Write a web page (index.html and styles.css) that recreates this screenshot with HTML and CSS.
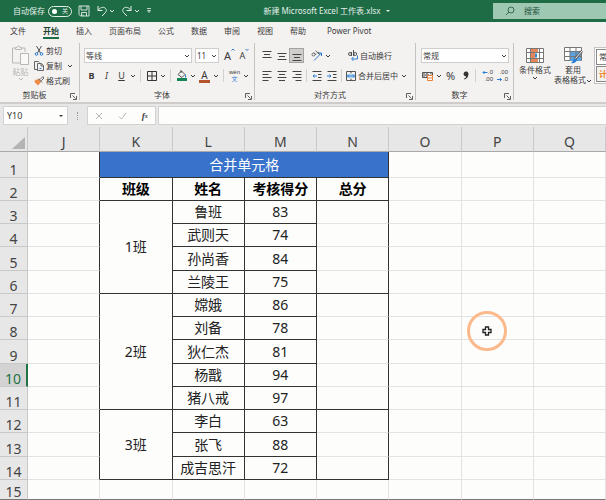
FILE: index.html
```html
<!DOCTYPE html>
<html lang="zh-CN">
<head>
<meta charset="utf-8">
<title>新建 Microsoft Excel 工作表.xlsx</title>
<link rel="stylesheet" href="styles.css">
</head>
<body>
<svg class="defs" aria-hidden="true">
  <symbol id="chev" viewBox="0 0 6 4"><path d="M1 1l2 2 2-2" fill="none" stroke="currentColor"/></symbol>
  <symbol id="launch" viewBox="0 0 7 7"><path d="M.5 5V.5H5M2.500 2.500l3 3M6.500 3v3.500H3" fill="none" stroke="currentColor" stroke-width=".8"/></symbol>
</svg>

<header class="titlebar">
  <label class="autosave">自动保存 <input type="checkbox" role="switch"><span class="switch">关</span></label>
  <button class="tb" aria-label="保存"><svg width="12" height="12" viewBox="0 0 12 12"><path d="M1 1h10v10H2.500L1 9.500zM3 1v4h6V1M3.500 11V7.500h5V11M5 9.500V11" fill="none" stroke="currentColor" stroke-width=".9"/></svg></button>
  <button class="tb" aria-label="撤消"><svg width="12" height="12" viewBox="0 0 12 12"><path d="M2 1v4.500h4.500M2 5.500C4 2.500 7 1.500 9 3s1.500 3.500 0 5L6 11" fill="none" stroke="currentColor"/></svg><svg class="chev"><use href="#chev"/></svg></button>
  <button class="tb" aria-label="恢复"><svg width="12" height="12" viewBox="0 0 12 12"><path d="M10 1v4.500H5.500M10 5.500C8 2.500 5 1.500 3 3s-1.500 3.500 0 5l3 3" fill="none" stroke="currentColor"/></svg><svg class="chev"><use href="#chev"/></svg></button>
  <button class="tb" aria-label="自定义快速访问工具栏"><svg width="6" height="6" viewBox="0 0 6 6"><path d="M1 .5h4M1.500 2.500h3L3 4.500z" fill="none" stroke="currentColor" stroke-width=".8"/></svg></button>
  <h1>新建 Microsoft Excel 工作表.xlsx <span class="caret"></span></h1>
  <label class="search"><svg width="10" height="10" viewBox="0 0 10 10"><circle cx="6" cy="4" r="3" fill="none" stroke="currentColor" stroke-width=".8"/><path d="M4 6L1 9" stroke="currentColor" stroke-width=".8"/></svg><input type="search" placeholder="搜索" aria-label="搜索"></label>
</header>

<nav class="tabs">
  <a href="#">文件</a><a href="#" class="on" aria-current="page">开始</a><a href="#">插入</a><a href="#">页面布局</a><a href="#">公式</a><a href="#">数据</a><a href="#">审阅</a><a href="#">视图</a><a href="#">帮助</a><a href="#">Power Pivot</a>
</nav>

<section class="ribbon">
  <div class="group clipboard">
    <div class="tools">
      <button class="big off"><svg width="19" height="21" viewBox="0 0 19 21"><path d="M4 3H1.500v15H9M11 3h3v4M4.500 4.500v-2H6c0-2 3-2 3 0h1.500v2z" fill="none" stroke="currentColor"/><path d="M9.500 8.500h8v11h-8z" fill="#f8f8f8" stroke="currentColor"/></svg><span>粘贴</span><svg class="chev"><use href="#chev"/></svg></button>
      <div class="stack">
        <button><svg width="10" height="10" viewBox="0 0 10 10"><path d="M2.500 0l4 7M7.500 0l-4 7" stroke="#555" fill="none"/><circle cx="2.500" cy="8" r="1.300" fill="none" stroke="#2b7cd3"/><circle cx="7.500" cy="8" r="1.300" fill="none" stroke="#2b7cd3"/></svg>剪切</button>
        <button><svg width="10" height="10" viewBox="0 0 10 10"><path d="M3.500 8.500h-3v-8h4l1 1M3.500 2.500h4l2 2v5h-6zM7 3v2h2" fill="none" stroke="#555" stroke-width=".9"/><path d="M5.500 7.500h2" stroke="#2b7cd3"/></svg>复制<svg class="chev"><use href="#chev"/></svg></button>
        <button><svg width="10" height="10" viewBox="0 0 10 10"><path d="M1 4l4-1 2 3-3 3.500L.5 6z" fill="#ef8b45"/><path d="M4.500 2.500l3.500 4M6 3.500L9 .500 10 2 7.300 4.800" fill="none" stroke="#555" stroke-width=".9"/></svg>格式刷</button>
      </div>
    </div>
    <footer>剪贴板<button aria-label="剪贴板设置"><svg class="launch"><use href="#launch"/></svg></button></footer>
  </div>

  <div class="group font">
    <div class="tools rows">
      <div class="row">
        <span class="pick face"><select aria-label="字体"><option>等线</option></select><svg class="chev"><use href="#chev"/></svg></span>
        <span class="pick size"><select aria-label="字号"><option>11</option></select><svg class="chev"><use href="#chev"/></svg></span>
        <button class="ic letter" aria-label="增大字号">A<svg width="4" height="8" viewBox="0 0 4 8"><path d="M.5 2.500L2 1l1.500 1.500" fill="none" stroke="#2b7cd3"/></svg></button>
        <button class="ic letter less" aria-label="减小字号">A<svg width="4" height="8" viewBox="0 0 4 8"><path d="M.5 1L2 2.500 3.500 1" fill="none" stroke="#2b7cd3"/></svg></button>
      </div>
      <div class="row">
        <button class="ic"><b>B</b></button><button class="ic"><i>I</i></button><button class="ic"><u>U</u></button><button class="dd" aria-label="下划线选项"><svg class="chev"><use href="#chev"/></svg></button><span class="sep"></span>
        <button class="ic" aria-label="边框"><svg width="10" height="10" viewBox="0 0 10 10"><path d="M.5.5h9v9h-9zM5 .5v9M.5 5h9" fill="none" stroke="#333"/></svg></button><button class="dd" aria-label="边框选项"><svg class="chev"><use href="#chev"/></svg></button><span class="sep"></span>
        <button class="ic" aria-label="填充颜色"><svg width="12" height="11" viewBox="0 0 12 11"><path d="M2 4.500l3.500-3.500 3.500 3.500-3 3zM5 0v3" fill="none" stroke="#444" stroke-width=".9"/><path d="M9 4q2 2 1 3.500H9z" fill="#2b7cd3"/><path d="M1 8h10v3H1z" fill="#158454"/></svg></button><button class="dd" aria-label="填充颜色选项"><svg class="chev"><use href="#chev"/></svg></button>
        <button class="ic color" aria-label="字体颜色">A</button><button class="dd" aria-label="字体颜色选项"><svg class="chev"><use href="#chev"/></svg></button><span class="sep"></span>
        <button class="ic pinyin" aria-label="拼音指南"><span>wén</span><span>文</span></button><button class="dd" aria-label="拼音选项"><svg class="chev"><use href="#chev"/></svg></button>
      </div>
    </div>
    <footer>字体<button aria-label="字体设置"><svg class="launch"><use href="#launch"/></svg></button></footer>
  </div>

  <div class="group align">
    <div class="tools rows">
      <div class="row">
        <button class="ic" aria-label="顶端对齐"><svg width="10" height="12" viewBox="0 0 10 12"><path d="M.5 1.500h9M2 4.500h6M.5 7.500h9" stroke="#444"/></svg></button><button class="ic" aria-label="垂直居中"><svg width="10" height="12" viewBox="0 0 10 12"><path d="M.5 3.500h9M2 6.500h6M.5 9.500h9" stroke="#444"/></svg></button><button class="ic pressed" aria-label="底端对齐" aria-pressed="true"><svg width="10" height="12" viewBox="0 0 10 12"><path d="M.5 4.500h9M2 7.500h6M.5 10.500h9" stroke="#444"/></svg></button><span class="gap"></span>
        <button class="ic" aria-label="方向"><svg width="12" height="12" viewBox="0 0 12 12"><path d="M3 10.500L10.500 3M7.500 3h3v3" fill="none" stroke="#2b7cd3"/><circle cx="2.500" cy="4.500" r="1.500" fill="none" stroke="#555" stroke-width=".8"/><path d="M3 2.500l2 2.500M4.500.5l4 4M6 3.500c0-2 3-1.500 2 .8" fill="none" stroke="#555" stroke-width=".8"/></svg></button><button class="dd" aria-label="方向选项"><svg class="chev"><use href="#chev"/></svg></button>
        <button class="text wrap"><svg width="10" height="11" viewBox="0 0 10 11"><circle cx="2" cy="4" r="1.500" fill="none" stroke="#444" stroke-width=".9"/><path d="M3.500 2v4M5.500 0v6" stroke="#444" stroke-width=".9"/><circle cx="7.200" cy="4" r="1.500" fill="none" stroke="#444" stroke-width=".9"/><path d="M9.500 5.500v3.500H4M5.500 7L3.500 9l2 1.800" fill="none" stroke="#2b7cd3"/></svg>自动换行</button>
      </div>
      <div class="row">
        <button class="ic" aria-label="左对齐"><svg width="10" height="10" viewBox="0 0 10 10"><path d="M.5.5h9M.5 3.500h6M.5 6.500h9M.5 9.500h6" stroke="#444"/></svg></button><button class="ic" aria-label="居中"><svg width="10" height="10" viewBox="0 0 10 10"><path d="M.5.5h9M2 3.500h6M.5 6.500h9M2 9.500h6" stroke="#444"/></svg></button><button class="ic" aria-label="右对齐"><svg width="10" height="10" viewBox="0 0 10 10"><path d="M.5.5h9M3.500 3.500h6M.5 6.500h9M3.500 9.500h6" stroke="#444"/></svg></button><span class="sep"></span>
        <button class="ic" aria-label="减少缩进量"><svg width="10" height="10" viewBox="0 0 10 10"><path d="M.5.500h9M6 3.500h3.500M6 6.500h3.500M.5 9.500h9" stroke="#444"/><path d="M5 5H1M2.500 3.500L1 5l1.500 1.500" fill="none" stroke="#2b7cd3"/></svg></button><button class="ic" aria-label="增加缩进量"><svg width="10" height="10" viewBox="0 0 10 10"><path d="M.5.500h9M6 3.500h3.500M6 6.500h3.500M.5 9.500h9" stroke="#444"/><path d="M0 5h4M2.500 3.500L4 5 2.500 6.500" fill="none" stroke="#2b7cd3"/></svg></button><span class="sep"></span>
        <button class="text merge"><svg width="10" height="10" viewBox="0 0 10 10"><path d="M.5.500h9v9h-9zM5 .5v2M5 7.500v2" fill="none" stroke="#555"/><path d="M1 3h8v4H1z" fill="#c3ddf5"/><path d="M1.500 5h7M3 3.500L1.500 5 3 6.500M7 3.500L8.500 5 7 6.500" fill="none" stroke="#2b7cd3"/></svg>合并后居中<svg class="chev"><use href="#chev"/></svg></button>
      </div>
    </div>
    <footer>对齐方式<button aria-label="对齐设置"><svg class="launch"><use href="#launch"/></svg></button></footer>
  </div>

  <div class="group number">
    <div class="tools rows">
      <div class="row"><span class="pick format"><select aria-label="数字格式"><option>常规</option></select><svg class="chev"><use href="#chev"/></svg></span></div>
      <div class="row">
        <button class="ic" aria-label="会计数字格式"><svg width="12" height="10" viewBox="0 0 12 10"><path d="M.5 1.500h10v5H.5zM2 1.500v5M9 1.500v2" fill="none" stroke="#555"/><circle cx="5" cy="4" r="1.300" fill="none" stroke="#555"/><path d="M5.500 4.500h5v5h-5z" fill="#fff" stroke="#e8833a"/><path d="M5.500 7h5" stroke="#e8833a"/></svg></button><button class="dd" aria-label="会计格式选项"><svg class="chev"><use href="#chev"/></svg></button><button class="ic pct">%</button><button class="ic" aria-label="千位分隔样式"><svg width="6" height="9" viewBox="0 0 6 9"><path d="M3 .5C5.500.5 6 3 5 5.300 4.300 7 3 8 1.300 8.500l-.3-.8c1.300-.6 2-1.400 2.200-2.500C1.500 5.500.6 4.500.6 3S1.500.5 3 .5z" fill="#333"/></svg></button><span class="sep"></span>
        <button class="ic dec" aria-label="增加小数位数"><span><svg width="6" height="5" viewBox="0 0 6 5"><path d="M5.500 2.500H1M2.500 1L1 2.500 2.500 4" fill="none" stroke="#2b7cd3"/></svg>.0</span><span>.00</span></button><button class="ic dec" aria-label="减少小数位数"><span>.00</span><span><svg width="6" height="5" viewBox="0 0 6 5"><path d="M0 2.500h4.500M3 1l1.500 1.500L3 4" fill="none" stroke="#2b7cd3"/></svg>.0</span></button>
      </div>
    </div>
    <footer>数字<button aria-label="数字设置"><svg class="launch"><use href="#launch"/></svg></button></footer>
  </div>

  <div class="group styles">
    <div class="tools">
      <button class="big"><svg width="18" height="15" viewBox="0 0 18 15"><path d="M.5.500h17v14H.500zM4.500.5v14M13.500.5v14M.5 4.500h17M.5 10.500h17" fill="#fff" stroke="#777"/><path d="M5 1h7v3H5zM5 5h4v5H5zM5 11h7v3H5z" fill="#e6875b"/><path d="M9 5.500h2v4H9z" fill="#3b87d0"/></svg><span>条件格式</span><svg class="chev"><use href="#chev"/></svg></button>
      <button class="big"><svg width="19" height="17" viewBox="0 0 19 17"><path d="M.5.500h17v13H.500z" fill="#fff" stroke="#777"/><path d="M6 5h11v9H6z" fill="#5aa2e0"/><path d="M6 .5v13M12 .5v13M.5 4.500h17M.5 9.500h17" stroke="#777" fill="none"/><path d="M18 4l-7 8" stroke="#555" stroke-width="2.500"/><path d="M18 4l-7 8" stroke="#fff"/><path d="M11 11l2 2q-2 4-6 3 2-1 2-3z" fill="#2b7cd3"/></svg><span>套用<br>表格格式<svg class="chev"><use href="#chev"/></svg></span></button>
      <div class="gallery"><button>常规</button><button class="calc">计算</button></div>
    </div>
  </div>
</section>

<section class="formula">
  <div class="name"><input type="text" value="Y10" aria-label="名称框"><span class="caret"></span></div>
  <span class="grip"></span>
  <div class="fx">
    <button aria-label="取消"><svg width="8" height="8" viewBox="0 0 8 8"><path d="M1 1l6 6M7 1L1 7" stroke="#b5b5b5"/></svg></button>
    <button aria-label="输入"><svg width="9" height="8" viewBox="0 0 9 8"><path d="M1 4.500L3.500 7 8 1" fill="none" stroke="#b5b5b5"/></svg></button>
    <button class="fn" aria-label="插入函数">f<sub>x</sub></button>
  </div>
  <input class="bar" type="text" aria-label="编辑栏">
</section>

<main class="sheet">
  <table>
    <colgroup><col class="rh"><col span="8"></colgroup>
    <thead><tr><th class="corner" aria-label="全选"><svg width="14" height="13" viewBox="0 0 14 13"><path d="M13 0v12H0z" fill="#b4b4b4"/></svg></th><th>J</th><th>K</th><th>L</th><th>M</th><th>N</th><th>O</th><th>P</th><th>Q</th></tr></thead>
    <tbody>
      <tr><th>1</th><td class="edge"></td><td colspan="4" class="title">合并单元格</td><td></td><td></td><td></td></tr>
      <tr class="heads"><th>2</th><td class="edge"></td><td class="d">班级</td><td class="d">姓名</td><td class="d">考核得分</td><td class="d">总分</td><td></td><td></td><td></td></tr>
      <tr><th>3</th><td class="edge"></td><td class="d" rowspan="4">1班</td><td class="d">鲁班</td><td class="d">83</td><td class="edge"></td><td></td><td></td><td></td></tr>
      <tr><th>4</th><td class="edge"></td><td class="d">武则天</td><td class="d">74</td><td class="edge"></td><td></td><td></td><td></td></tr>
      <tr><th>5</th><td class="edge"></td><td class="d">孙尚香</td><td class="d">84</td><td class="edge"></td><td></td><td></td><td></td></tr>
      <tr><th>6</th><td class="edge"></td><td class="d">兰陵王</td><td class="d">75</td><td class="d"></td><td></td><td></td><td></td></tr>
      <tr><th>7</th><td class="edge"></td><td class="d" rowspan="5">2班</td><td class="d">嫦娥</td><td class="d">86</td><td class="edge"></td><td></td><td></td><td></td></tr>
      <tr><th>8</th><td class="edge"></td><td class="d">刘备</td><td class="d">78</td><td class="edge"></td><td></td><td></td><td></td></tr>
      <tr><th>9</th><td class="edge"></td><td class="d">狄仁杰</td><td class="d">81</td><td class="edge"></td><td></td><td></td><td></td></tr>
      <tr><th class="current">10</th><td class="edge"></td><td class="d">杨戬</td><td class="d">94</td><td class="edge"></td><td></td><td></td><td></td></tr>
      <tr><th>11</th><td class="edge"></td><td class="d">猪八戒</td><td class="d">97</td><td class="d"></td><td></td><td></td><td></td></tr>
      <tr><th>12</th><td class="edge"></td><td class="d" rowspan="3">3班</td><td class="d">李白</td><td class="d">63</td><td class="edge"></td><td></td><td></td><td></td></tr>
      <tr><th>13</th><td class="edge"></td><td class="d">张飞</td><td class="d">88</td><td class="edge"></td><td></td><td></td><td></td></tr>
      <tr><th>14</th><td class="edge"></td><td class="d">成吉思汗</td><td class="d">72</td><td class="d"></td><td></td><td></td><td></td></tr>
      <tr class="last"><th>15</th><td></td><td></td><td></td><td></td><td></td><td></td><td></td><td></td></tr>
    </tbody>
  </table>
  <div class="pointer"><svg width="10" height="10" viewBox="0 0 10 10"><path d="M3.500 1h3v2.500H9v3H6.500V9h-3V6.500H1v-3h2.500z" fill="#fff" stroke="#222" stroke-width="1.300"/></svg></div>
</main>
</body>
</html>
```
FILE: styles.css
```css
* { box-sizing: border-box; }
body {
  margin: 0;
  min-height: 100vh;
  overflow: hidden;
  background: #fdfdfc;
  color: #3a3a3a;
  font: 8px/10px "Noto Sans", "Noto Sans CJK SC", sans-serif;
}
button, input, select {
  margin: 0;
  padding: 0;
  border: 0;
  background: none;
  color: inherit;
  font: inherit;
  appearance: none;
  outline: none;
}
button { display: flex; align-items: center; white-space: nowrap; }
svg { flex: none; }
.defs { position: absolute; width: 0; height: 0; }
.chev { width: 6px; height: 4px; }
.launch { width: 7px; height: 7px; display: block; }
.caret {
  display: inline-block;
  border: 2px solid transparent;
  border-top-color: currentColor;
  border-bottom: 0;
}

.titlebar {
  display: flex;
  align-items: center;
  height: 22px;
  padding-left: 13px;
  gap: 6px;
  background: #1e6c46;
  color: #e4efe9;
}
.autosave { display: flex; align-items: center; gap: 3px; }
.autosave input { position: absolute; opacity: 0; }
.switch {
  display: flex;
  align-items: center;
  justify-content: space-between;
  width: 24px;
  height: 11px;
  padding: 0 3px;
  border: 1px solid currentColor;
  border-radius: 6px;
  font-size: 6px;
}
.switch::before { content: ""; width: 5px; height: 5px; border-radius: 50%; background: #fff; }
.tb { gap: 1px; }
h1 { flex: 1; margin: 0; padding-left: 8px; font-size: 8px; font-weight: 400; text-align: center; white-space: nowrap; }
h1 .caret { margin: 0 0 2px 3px; }
.search {
  display: flex;
  align-items: center;
  gap: 9px;
  width: 113px;
  height: 16px;
  padding-left: 12px;
  background: #9fc8b3;
  color: #1e5138;
}
.search input { flex: 1; min-width: 0; }
.search input::placeholder { color: inherit; opacity: 1; }

.tabs { display: flex; gap: 17px; height: 21px; padding: 4px 10px 0; background: #f4f2f1; }
.tabs a { color: inherit; text-decoration: none; height: 13px; line-height: 10px; white-space: nowrap; }
.tabs a:last-child { margin-left: 4px; }
.tabs .on { border-bottom: 2px solid #1e6c46; font-weight: 700; color: #1d4431; }

.ribbon {
  display: flex;
  height: 61px;
  padding-bottom: 2px;
  background: #f4f2f1;
  border-bottom: 2px solid #cfcccb;
}
.group { display: flex; flex-direction: column; flex: none; border-right: 1px solid #c6c4c3; }
.clipboard { width: 80px; }
.font { width: 175px; }
.align { width: 161px; }
.number { width: 98px; }
.styles { flex: 1; min-width: 0; overflow: hidden; border: 0; }
.tools { display: flex; flex: 1; }
.group footer { position: relative; height: 10px; text-align: center; padding-right: 10px; }
.group footer button { position: absolute; right: 2px; bottom: 0; }
.big { flex-direction: column; gap: 1px; line-height: 9px; }
.off { color: #b9b7b6; }
.clipboard .big { padding-left: 11px; padding-top: 2px; justify-content: flex-start; }
.stack { display: flex; flex-direction: column; padding: 0 0 0 4px; }
.stack button { height: 15px; gap: 2px; }
.stack .chev { margin-left: 3px; }

.rows { flex-direction: column; padding: 5px 0 0 4px; gap: 5px; }
.row { display: flex; align-items: center; height: 15px; }
.pick { position: relative; display: flex; height: 15px; background: #fff; border: 1px solid #d0cecd; margin-right: 3px; }
.pick select { width: 100%; padding-left: 1px; }
.pick .chev { position: absolute; right: 1px; top: 5px; pointer-events: none; }
.face { width: 108px; }
.size { width: 24px; }
.format { width: 88px; margin-left: 1px; }
.ic { width: 15px; height: 15px; justify-content: center; font-size: 9px; }
.letter { font-size: 11px; }
.less { font-size: 9px; }
.letter svg { align-self: flex-start; }
.dd { width: 8px; justify-content: center; }
.sep { width: 1px; height: 13px; margin: 0 2px; background: #d3d1d0; }
.font .sep { margin: 0 3px; }
.gap { width: 5px; }
.color { position: relative; line-height: 9px; font-size: 10px; }
.color::after { content: ""; position: absolute; left: 2px; right: 2px; bottom: 0; height: 3px; background: #b5532b; }
.pinyin { flex-direction: column; font: 6px/7px "Liberation Sans", "Noto Sans CJK SC", sans-serif; }
.pinyin span + span { color: #2b7cd3; }
.pressed { background: #d0cecd; border: 1px solid #a5a3a2; }
.text { gap: 2px; }
.wrap { margin-left: 16px; }
.merge { margin-left: 2px; }
.text .chev { margin-left: 1px; }
.pct { font-size: 11px; }
.dec { flex-direction: column; align-items: flex-end; font: 6px/7px "Liberation Sans", sans-serif; }
.dec span { display: flex; align-items: center; }
.styles .tools { padding: 4px 0 0 4px; gap: 2px; }
.styles .big { justify-content: flex-start; width: 34px; flex: none; line-height: 10px; }
.styles .big svg:first-child { height: 17px; }
.styles .big + .big { width: 38px; }
.gallery { display: flex; flex-direction: column; flex: none; width: 40px; height: 37px; padding: 1px; gap: 1px; background: #fff; border: 1px solid #c6c4c3; }
.gallery button { flex: 1; padding-left: 2px; border: 1px solid #8a8887; }
.gallery .calc { color: #ee8128; font-weight: 700; background: #f4f2f1; }

.formula { display: flex; align-items: center; height: 23px; padding-left: 3px; background: #e7e7e7; }
.name, .fx { display: flex; align-items: center; height: 19px; background: #fdfdfc; border: 1px solid #d2d2d2; }
.name { width: 65px; padding: 0 4px 0 3px; font-size: 9px; }
.name input { flex: 1; min-width: 0; }
.grip { width: 1px; height: 8px; margin: 0 9px; border-left: 1px dotted #999; }
.fx { width: 69px; justify-content: space-around; }
.fn { font: italic bold 9px/10px "Liberation Serif", serif; }
.fn sub { font-size: 6px; }
.bar { flex: 1; min-width: 0; height: 19px; margin-left: 2px; background: #fdfdfc; border: 1px solid #d2d2d2; border-right: 0; }

.sheet { position: relative; }
table { width: 100%; table-layout: fixed; border-collapse: separate; border-spacing: 0; font-size: 14px; line-height: 18px; }
.rh { width: 28px; }
th, td { padding: 0; overflow: hidden; text-align: center; white-space: nowrap; border: 0 solid #e3e3e6; border-width: 0 1px 1px 0; }
td { color: #222; }
th { font-weight: 400; background: #e7e7e7; border-color: #c9c9c9; color: #444; vertical-align: bottom; }
thead th { height: 25px; border-bottom-color: #a9a9a9; }
thead .corner svg { display: block; margin: 0 1px 1px auto; }
tbody tr { height: 23px; }
tbody tr:nth-child(4n+1) { height: 24px; }
tbody tr:first-child { height: 26px; }
tbody .last { height: 20px; }
tbody th { line-height: 14px; }
.edge { border-right-color: #333; }
.d { border-color: #333; }
.title { background: #3972cb; color: #fff; border-color: #333; }
.heads td { font-weight: 700; color: #000; }
.current { background: #d3d3d3; color: #217346; border-right: 2px solid #217346; }
.last th, .last td { border-bottom-color: #777; }
.pointer {
  position: absolute;
  top: 184px;
  left: 77%;
  display: flex;
  align-items: center;
  justify-content: center;
  width: 40px;
  height: 40px;
  border: 3px solid #fcb98b;
  border-radius: 50%;
}
```
